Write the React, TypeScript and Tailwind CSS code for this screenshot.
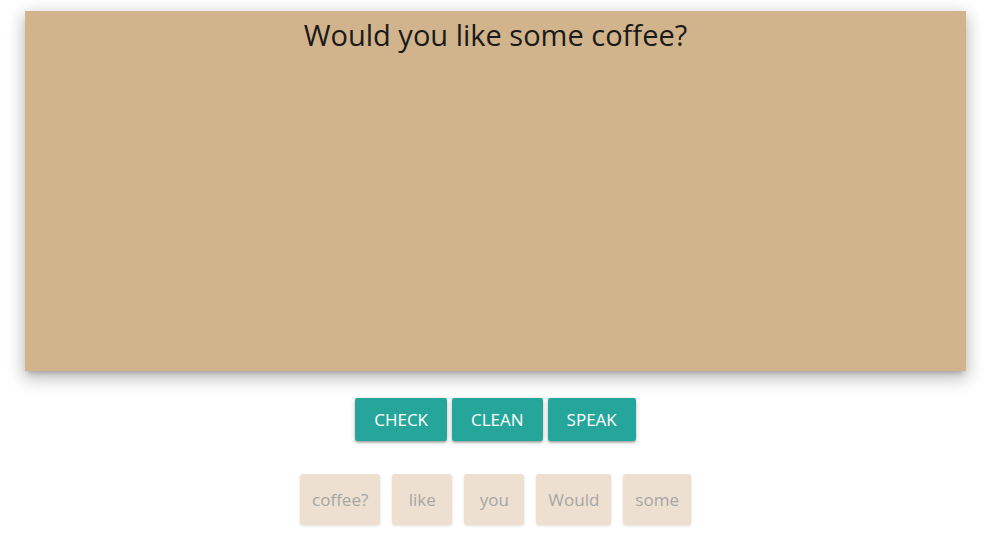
const words = ["coffee?", "like", "you", "Would", "some"];

const App = () => {
  return (
    <div
      className="min-h-screen bg-white pt-[11px]"
      style={{ fontFamily: '"Open Sans", "Noto Sans", sans-serif' }}
    >
      <div className="mx-[25px] h-[360px] bg-[#d2b48c] shadow-[0_8px_17px_2px_rgba(0,0,0,0.14),0_3px_14px_2px_rgba(0,0,0,0.12),0_5px_5px_-3px_rgba(0,0,0,0.2)]">
        <h1 className="pt-[4px] text-center text-[29px] leading-[40px] text-[#1a1a1a]">
          Would you like some coffee?
        </h1>
      </div>

      <div className="mt-[27px] flex justify-center gap-[5px]">
        {["CHECK", "CLEAN", "SPEAK"].map((label) => (
          <button
            key={label}
            className="h-[43px] rounded-[2px] bg-[#26a69a] px-[19px] text-[17px] text-white shadow-[0_2px_2px_0_rgba(0,0,0,0.14),0_3px_1px_-2px_rgba(0,0,0,0.12),0_1px_5px_0_rgba(0,0,0,0.2)]"
          >
            {label}
          </button>
        ))}
      </div>

      <div className="mt-[33px] flex justify-center gap-[12px]">
        {words.map((w) => (
          <div
            key={w}
            className="flex h-[51px] min-w-[60px] items-center justify-center rounded-[3px] bg-[#ede0d0] px-[12px] text-[17px] text-[#a6a6a6] shadow-[0_1px_3px_0_rgba(0,0,0,0.12)]"
          >
            {w}
          </div>
        ))}
      </div>
    </div>
  );
};

export default App;
